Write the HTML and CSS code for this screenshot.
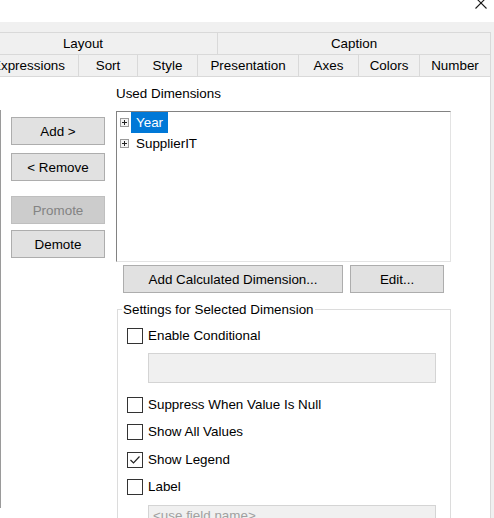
FILE: index.html
```html
<!DOCTYPE html>
<html lang="en">
<head>
    <meta charset="UTF-8">
    <title>Chart Properties</title>
    <link rel="stylesheet" href="styles.css">
</head>
<body>
    <div class="titleBar">
        <svg class="closeIcon" width="12" height="12" viewBox="0 0 12 12">
            <path d="M0.5 0.5 L11.5 11.5 M11.5 0.5 L0.5 11.5" stroke="#1a1a1a" stroke-width="1.1" fill="none"/>
        </svg>
    </div>

    <div class="tabStrip">
        <div class="tabRow rowTop">
            <div class="tab" style="width: 269px">Layout</div>
            <div class="tab" style="width: 273px">Caption</div>
        </div>
        <div class="tabRow rowBottom">
            <div class="tab" style="width: 100px">Expressions</div>
            <div class="tab" style="width: 59px">Sort</div>
            <div class="tab" style="width: 60px">Style</div>
            <div class="tab" style="width: 101px">Presentation</div>
            <div class="tab" style="width: 60px">Axes</div>
            <div class="tab" style="width: 61px">Colors</div>
            <div class="tab" style="width: 71px">Number</div>
        </div>
    </div>

    <div class="panel">
        <div class="fieldList"></div>

        <div class="sideButtons">
            <button class="btn addBtn">Add &gt;</button>
            <button class="btn removeBtn">&lt; Remove</button>
            <button class="btn promoteBtn" disabled>Promote</button>
            <button class="btn demoteBtn">Demote</button>
        </div>

        <div class="main">
            <div class="usedLabel">Used Dimensions</div>
            <div class="dimList">
                <div class="treeRow">
                    <svg class="plus" width="9" height="9" viewBox="0 0 9 9">
                        <rect x="0.5" y="0.5" width="8" height="8" fill="#f4f4f4" stroke="#9a9a9a"/>
                        <path d="M2 4.5 H7 M4.5 2 V7" stroke="#222" stroke-width="1"/>
                    </svg>
                    <span class="treeLabel selected">Year</span>
                </div>
                <div class="treeRow">
                    <svg class="plus" width="9" height="9" viewBox="0 0 9 9">
                        <rect x="0.5" y="0.5" width="8" height="8" fill="#f4f4f4" stroke="#9a9a9a"/>
                        <path d="M2 4.5 H7 M4.5 2 V7" stroke="#222" stroke-width="1"/>
                    </svg>
                    <span class="treeLabel">SupplierIT</span>
                </div>
            </div>

            <div class="dimActions">
                <button class="btn calcBtn">Add Calculated Dimension...</button>
                <button class="btn editBtn">Edit...</button>
            </div>

            <fieldset class="settings">
                <legend>Settings for Selected Dimension</legend>

                <div class="checkRow enableRow">
                    <span class="box"></span>
                    <span class="checkText">Enable Conditional</span>
                </div>
                <div class="textBox condBox"></div>

                <div class="checkRow suppressRow">
                    <span class="box"></span>
                    <span class="checkText">Suppress When Value Is Null</span>
                </div>
                <div class="checkRow allRow">
                    <span class="box"></span>
                    <span class="checkText">Show All Values</span>
                </div>
                <div class="checkRow legendRow">
                    <span class="box">
                        <svg width="14" height="14" viewBox="0 0 14 14">
                            <path d="M2.5 7 L5.5 10 L11.5 3.5" stroke="#222" stroke-width="1.2" fill="none"/>
                        </svg>
                    </span>
                    <span class="checkText">Show Legend</span>
                </div>
                <div class="checkRow labelRow">
                    <span class="box"></span>
                    <span class="checkText">Label</span>
                </div>
                <div class="textBox labelBox">&lt;use field name&gt;</div>
            </fieldset>
        </div>
    </div>
</body>
</html>
```

FILE: styles.css
```css
/* Page */
body {
  margin: 0;
  height: 518px;
  overflow: hidden;
  background: #f0f0f0;
  font: 13.4px "Liberation Sans", Arial, sans-serif;
  color: #000000;
}

.titleBar {
  height: 22px;
  background: #ffffff;
  display: flex;
  justify-content: flex-end;
}

.closeIcon {
  margin-top: -3px;
  margin-right: 7px;
}

/* Tabs */
.tabStrip {
  padding-top: 10px;
  overflow: hidden;
}

.tabRow {
  display: flex;
  height: 22px;
}

.rowTop {
  margin-left: -51px;
}

.rowBottom {
  margin-left: -21px;
}

.tab {
  box-sizing: border-box;
  flex: none;
  height: 22px;
  border-top: 1px solid #d9d9d9;
  border-right: 1px solid #d9d9d9;
  display: flex;
  align-items: center;
  justify-content: center;
  line-height: 15px;
}

/* Content panel */
.panel {
  box-sizing: border-box;
  display: flex;
  width: 491px;
  height: 442px;
  background: #ffffff;
  border-top: 1px solid #d9d9d9;
  border-right: 1px solid #d9d9d9;
}

.fieldList {
  width: 0;
  height: 398px;
  margin-top: 33px;
  border-right: 1px solid #9a9a9a;
}

.sideButtons {
  display: flex;
  flex-direction: column;
  width: 94px;
  margin-left: 10px;
  padding-top: 40px;
}

.btn {
  box-sizing: border-box;
  height: 28px;
  margin: 0;
  padding: 0;
  background: #e1e1e1;
  border: 1px solid #adadad;
  font: inherit;
  color: #000000;
}

.removeBtn { margin-top: 8px; }
.promoteBtn {
  margin-top: 15px;
  background: #cccccc;
  border-color: #bfbfbf;
  color: #838383;
}
.demoteBtn { margin-top: 6px; }

.main {
  width: 335px;
  margin-left: 11px;
}

.usedLabel {
  margin-top: 9px;
  line-height: 15px;
}

.dimList {
  box-sizing: border-box;
  height: 151px;
  margin-top: 10px;
  border: 1px solid #e3e3e3;
  border-top-color: #828282;
  border-left-color: #828282;
}

.treeRow {
  display: flex;
  align-items: center;
  height: 21px;
}

.plus {
  margin-left: 3px;
}

.treeLabel {
  margin-left: 2px;
  padding: 0 5px;
  line-height: 21px;
}

.selected {
  background: #0078d7;
  color: #ffffff;
}

.dimActions {
  display: flex;
  margin-top: 3px;
  padding-left: 7px;
}

.calcBtn { width: 220px; }
.editBtn { width: 94px; margin-left: 7px; }

/* Settings group */
.settings {
  box-sizing: border-box;
  width: 334px;
  height: 240px;
  margin: 9px 0 0 1px;
  padding: 0;
  border: 1px solid #dcdcdc;
}

.settings legend {
  margin-left: 4px;
  padding: 0 1px;
  line-height: 15px;
}

.checkRow {
  display: flex;
  align-items: center;
  height: 16px;
  margin-left: 9px;
}

.box {
  box-sizing: border-box;
  width: 16px;
  height: 16px;
  border: 1px solid #333333;
  background: #ffffff;
  display: flex;
}

.checkText {
  margin-left: 5px;
  line-height: 16px;
}

.enableRow { margin-top: 11px; }
.suppressRow { margin-top: 14px; }
.allRow { margin-top: 11px; }
.legendRow { margin-top: 12px; }
.labelRow { margin-top: 11px; }

.textBox {
  box-sizing: border-box;
  width: 288px;
  height: 30px;
  margin-left: 30px;
  background: #f0f0f0;
  border: 1px solid #d4d4d4;
}

.condBox { margin-top: 9px; }

.labelBox {
  margin-top: 10px;
  padding: 2px 0 0 4px;
  color: #a0a0a0;
  line-height: 15px;
}
```
